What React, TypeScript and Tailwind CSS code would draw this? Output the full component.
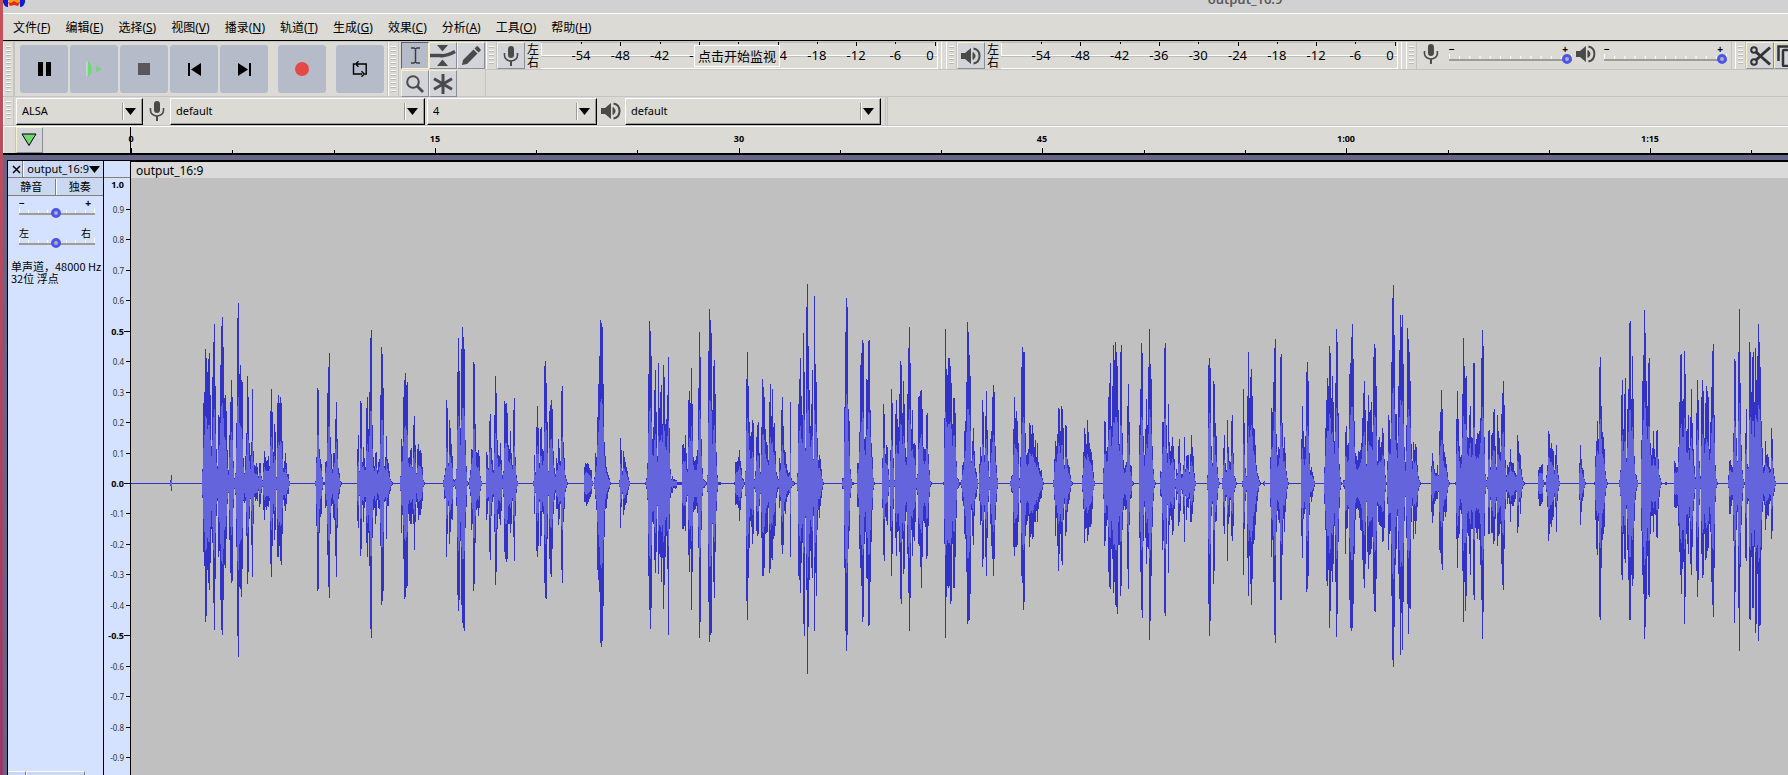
import React, { useMemo } from 'react';

const TRACK_NAME = 'output_16:9';

// Each line: first column, then "above,below" sample heights for every following column
const BURSTS = `
39 3,2 8,7
71 14,14 80,68 91,82 134,138 125,132 111,86 124,99 130,106 88,79 37,45 106,59 141,119 159,146 97,95 34,32 17,17 68,73 66,67 118,116 157,146 166,151 136,116 85,81 88,84 72,55 33,20 13,9 48,56 81,89 103,99 86,97 22,24 5,5 10,11 60,63 165,152 180,173 109,103 118,105 103,113 101,85 25,17 10,19 27,17 50,52 107,100 86,88 40,35 28,15 41,61 94,93 32,40 18,13 17,17 20,15 16,17 7,7 20,23 20,20 7,9 3,3 20,26 32,36 26,23 22,26 23,22 27,23 17,17 72,80 94,93 71,62 31,30 59,56 51,46 6,6 80,73 88,73 80,62 86,77 80,81 42,50 15,16 22,22 30,27 20,20 9,10 9,10 2,2
184 2,2 26,42 95,107 93,105 34,49 24,33 19,30 6,6 1,1 1,1 21,24 22,22 90,71 116,103 130,114 46,50 29,22 14,20 30,34 30,36 64,72 81,93 44,44 15,15 10,10 2,3 1,1
226 34,37 48,44 12,12 82,72 80,65 21,21 36,38 25,24 16,18 75,59 86,73 54,49 91,82 145,145 153,154 58,54 26,26 17,24 30,40 31,32 13,16 21,24 24,25 88,62 136,121 129,117 95,107 17,18 26,17 47,55 24,22 20,22 12,10 4,7 2,2 1,1
269 7,7 44,49 37,31 86,75 103,115 110,113 98,104 101,102 25,30 26,37 33,40 35,40 16,30 58,40 67,66 38,38 10,18 34,24 39,36 32,31 33,31 30,25 16,17 3,3 1,1
312 3,3 8,15 15,14 83,73 75,50 20,22 63,60 55,48 39,35 27,36 4,3 3,2 4,5 14,22 111,111 145,127 112,116 55,57 134,121 156,139 146,144 134,147 43,44 17,23 2,2 1,1 5,5 13,12 34,46 33,40 121,107 119,100 59,59 31,26 30,24 33,32 27,24 7,7 2,2
355 31,36 28,30 15,17 62,68 69,76 35,32 23,18 13,13 68,48 107,101 90,88 43,45 28,30 27,35 40,41 23,27 8,5 12,13 82,68 79,75 80,78 70,75 38,40 34,40 52,49 30,40 18,17 73,53 85,77 26,32 8,9 2,2
402 2,2 28,30 11,9 56,67 77,73 55,62 20,18 54,62 56,52 34,28 32,30 117,99 122,114 100,115 61,55 12,12 72,75 78,90 83,93 74,65 32,30 15,16 9,9 25,25 20,25 44,41 35,35 22,20 92,86 97,99 41,38 25,25 8,8 4,4 1,1
453 16,18 20,18 19,22 20,20 19,18 15,15 13,13 13,10 2,2 0,0 6,5 30,15 26,26 66,86 99,96 127,108 163,159 160,163 156,157 99,122 41,53 27,25 16,24 11,15 8,8 5,5 1,1
488 3,3 45,44 33,23 12,10 32,31 26,26 21,21 16,19 12,11 6,6 2,2
514 1,1 5,5 20,16 109,92 162,126 152,145 127,124 44,38 56,40 93,76 113,89 71,68 27,22 120,90 75,70 91,73 98,98 59,74 118,125 106,101 59,73 64,52 88,85 126,151 55,45 14,14 4,9 7,9 4,4 4,4 3,5 3,4 1,1 1,1 1,1 1,1 1,1 38,45 39,45 35,42 48,47 30,18 14,12 83,71 92,88 80,65 115,126 79,88 26,28 22,26 23,25 27,22 33,29 95,64 151,154 126,138 44,46 15,12 4,4 3,4 2,2 1,1 8,8 132,118 174,158 163,151 150,149 73,40 117,98 123,114 89,68 31,27 8,8 1,1 1,1 1,1
603 1,1 21,21 21,20 22,21 26,24 33,37 22,26 15,14 5,5 4,3 1,1 12,12 104,117 131,136 97,94 61,64 47,37 51,43 63,60 60,50 4,5 12,8 46,47 58,52 61,50 30,22 11,10 56,54 104,92 96,92 86,84 54,50 41,49 38,48 23,24 81,89 99,85 67,74 94,76 56,55 60,52 32,42 11,14 7,8 4,5 25,24 20,17 73,61 86,70 57,61 33,27 31,30 19,18 13,13 10,11 11,9 81,73 5,4 2,2 2,2 1,1
666 10,7 79,92 104,96 125,109 87,79 68,59 150,140 111,152 35,34 176,106 199,190 137,143 93,96 57,67 79,84 113,94 24,32 187,147 119,89 101,112 45,46 23,26 28,34 24,22 14,14 4,6 1,1
711 5,5 5,5 76,84 151,147 185,167 176,151 74,65 62,47 14,14 4,4 1,1 1,1
726 20,23 20,23 51,65 118,84 130,102 143,138 140,133 44,60 46,48 104,94 103,95 142,142 143,141 73,98 40,58 26,26 5,6 1,1
751 25,24 79,71 69,77 29,33 38,37 36,41 14,12 3,3 33,47 94,92 80,70 25,25 3,3 69,54 83,72 64,48 56,47 89,68 122,115 118,120 70,55 102,90 79,85 35,37 26,28 89,70 135,109 156,147 120,114 54,46 73,72 39,53 40,57 38,38 5,6 9,11 86,60 87,62 92,83 93,104 74,73 36,37 34,39 34,43 68,75 70,72 29,42 13,13 2,3 1,1
812 1,1 65,60 154,154 114,113 108,102 125,104 125,102 117,120 100,117 59,60 85,104 85,104 70,73 22,34 5,5 4,4 1,2 1,1 3,4 18,17 21,22 52,50 62,55 101,88 161,140 151,137 128,136 107,110 22,26 42,52 55,61 32,32 15,15 11,13 4,5 0,0 19,17 36,41 27,37 83,83 71,75 28,28 67,73 92,92 53,54 22,18 6,6 44,40 52,62 86,75 98,92 91,75 37,36 18,18 5,5
879 2,2 7,8 8,9 54,63 86,72 65,63 72,63 62,61 40,38 5,4 26,19 116,92 136,99 131,126 131,118 50,52 28,41 30,37 34,32 60,63 58,53 49,50 58,55 50,53 36,38 43,38 26,27 40,38 21,25 15,18 12,15 13,14 5,6 1,1
922 3,3 24,16 42,52 37,34 49,62 75,87 74,70 52,50 77,77 74,81 55,36 18,20 58,52 57,48 24,28 18,20 16,16 8,8 2,2 1,1
951 8,8 31,25 55,59 49,45 39,44 63,57 51,51 40,43 34,43 31,40 23,25 11,6 2,2
972 15,15 62,62 61,57 32,42 36,36 86,88 100,103 120,105 57,65 97,75 138,109 123,98 141,121 131,123 117,130 73,61 39,61 131,112 138,102 50,46 23,26 15,22 18,26 21,25 77,85 99,105 61,41 18,15 17,14 2,2 1,1
1008 58,54 94,88 140,126 130,134 47,57 28,23 54,54 84,80 58,63 116,65 154,156 119,137 104,92 37,43 14,17 3,4 1,1
1029 12,12 11,13 61,66 61,57 135,129 140,132 58,60 30,21 79,89 41,41 32,32 37,36 46,51 37,47 24,25 4,5 14,16 10,10 37,42 44,38 20,27 9,6 9,10 18,30 46,58 14,12 27,36 28,23 28,24 11,15 29,38 48,38 36,30 27,18 10,7 2,2
1076 8,6 118,120 125,152 115,137 37,32 20,20 102,100 99,87 60,38 47,37 16,16 5,4 1,1
1091 5,5 35,42 48,50 20,17 13,13 63,77 36,40 22,33 21,16 62,52 68,57 30,42 7,8 5,4 1,1
1111 2,3 94,91 60,45 15,17 7,8 87,74 131,112 85,72 106,100 114,121 87,95 55,60 54,56 38,41 18,28 10,17 7,8 3,2 1,1 0,0 0,0 1,1 2,2
1139 26,23 75,73 71,56 101,98 135,151 144,159 49,48 28,27 36,36 34,39 126,116 129,116 60,71 35,35 46,48 30,28 12,15 5,5 1,1
1170 44,52 77,74 52,35 36,30 47,25 111,108 121,105 102,92 30,31 13,13 16,18 11,13 7,7 2,3
1193 16,20 55,46 83,97 105,102 97,86 137,144 130,127 85,87 107,98 81,80 42,42 100,98 154,153 141,130 70,58 19,24 6,6 1,1
1212 3,3 3,5 51,70 57,45 38,44 40,25 109,116 120,144 146,147 159,144 124,120 62,70 30,36 27,25 23,24 32,26 31,34 33,46 40,47 65,76 90,95 102,104 73,80 19,18 62,68 88,85 71,71 73,70 81,65 51,53 126,110 139,127 135,128 97,95 22,22 43,38 46,41 36,42 41,43 55,58 50,57 24,44 8,8 1,1 22,20 68,66 63,50 44,47 121,112 185,176 198,183 148,143 69,81 69,65 40,32 97,90 133,115 168,171 156,129 168,166 119,118 36,37 21,13 58,54 155,120 144,150 131,124 102,125 39,38 22,22 41,55 33,37 39,50 36,37 18,23 7,7 3,3 1,1
1300 17,28 30,39 22,32 14,20 10,17 10,15 18,15 8,8 52,66 71,69 93,80 74,86 39,37 31,28 26,33 19,28 11,9 3,3 1,1
1324 1,1 64,55 92,84 64,54 37,50 26,26 28,30 89,87 145,138 117,98 105,127 107,112 46,49 45,52 68,70 77,91 46,45 45,45 120,111 120,116 39,44 44,49 50,55 49,45 52,56 65,81 125,116 153,155 137,128 46,52 9,10 3,3 6,5 52,50 53,50 16,16 48,49 50,49 71,60 74,57 37,35 16,17 68,62 52,52 45,50 31,40 69,80 90,101 102,106 78,65 23,25 8,8 18,20 16,14 21,20 34,38 21,20 20,22 20,22 12,18 10,15 8,8 48,49 42,43 30,18 28,30 14,14 6,5 2,2 1,1
1407 13,15 16,22 16,22 18,20 19,18 3,3 1,1 1,1 8,8 18,23 52,57 49,50 35,40 40,43 34,36 32,33 13,13 28,23 38,48 18,17 8,7 2,2
1448 20,16 38,41 24,28 15,17 13,13 4,4 1,1
1463 1,1 27,36 42,65 62,71 44,37 116,133 126,136 77,84 51,56 46,50 34,43 12,12 4,4 1,1
1488 3,3 13,12 88,91 103,96 54,50 89,75 105,79 25,25 74,66 94,96 160,136 162,136 84,91 127,102 84,95 27,37 9,16 8,7 3,3
1510 43,47 102,91 128,110 173,155 150,143 102,115 77,72 120,111 125,113 40,50 28,32 35,32 52,48 34,30 26,31 52,53 53,54 24,25 8,13 5,4 1,1 0,0 0,0 0,0 1,1 1,1
1543 22,23 20,24 16,24 16,22 36,42 81,68 128,91 129,110 82,85 84,78 132,140 109,113 52,50 54,60 68,70 35,34 66,80 94,91 60,63 34,27 17,15 6,5 70,87 103,113 83,96 22,21 7,5 86,70 103,94 92,91 45,50 80,76 97,74 92,67 86,64 34,40 61,48 96,98 132,121 139,133 68,84 18,18 4,4 1,1
1597 8,4 22,30 23,30 18,22 16,16 50,57 124,139 122,108 45,46 22,28 131,124 174,167 100,83 38,41 13,17 4,4 1,1 50,74 74,77 19,20 16,17 141,135 131,136 91,73 126,124 131,124 81,63 135,149 103,140 127,90 159,157 141,142 116,141 62,66 35,28 16,17 18,21 42,46 28,35 29,31 26,32 16,20 14,17 55,55 44,47 15,12 7,8 2,2
`;

const MID = 305;

const buildWave = () => {
  let peak = '';
  let rms = '';
  BURSTS.trim().split('\n').forEach((line) => {
    const [first, ...cols] = line.split(' ');
    const start = Number(first);
    const pairs = cols.map((c) => c.split(',').map(Number));
    const mean = (i: number) => (pairs[i] ? (pairs[i][0] + pairs[i][1]) / 2 : 0);
    pairs.forEach(([up, down], i) => {
      const x = start + i;
      peak += `M${x} ${MID - up}h1V${MID + 1 + down}h-1z`;
      const level = Math.round(Math.min(up - 1, down - 1, mean(i) * 0.38 + (mean(i - 1) + mean(i + 1)) * 0.07));
      if (level > 0) {
        rms += `M${x} ${MID - level}h1V${MID + 1 + level}h-1z`;
      }
    });
  });
  return { peak, rms };
};

const MENUS: [string, string][] = [
  ['文件', 'F'], ['编辑', 'E'], ['选择', 'S'], ['视图', 'V'], ['播录', 'N'], ['轨道', 'T'],
  ['生成', 'G'], ['效果', 'C'], ['分析', 'A'], ['工具', 'O'], ['帮助', 'H'],
];

const MicIcon = () => (
  <svg width="16" height="20" viewBox="0 0 16 20" fill="none" stroke="#4a4a4a">
    <rect x="5" y="0" width="6" height="12" rx="3" fill="#4a4a4a" stroke="none" />
    <path d="M1.500 7v2.500a6.500 5.500 0 0 0 13 0V7" strokeWidth="1.6" />
    <path d="M8 15v5" strokeWidth="2" />
  </svg>
);

const SpeakerIcon = () => (
  <svg width="20" height="18" viewBox="0 0 20 18" fill="none" stroke="#4a4a4a">
    <path d="M0 6h4l6-5v16l-6-5H0z" fill="#4a4a4a" stroke="none" />
    <path d="M12 5.500a4 4 0 0 1 0 7z" fill="#4a4a4a" strokeWidth="1" />
    <path d="M12.500 1.500c8 1.500 8 13.500 0 15" strokeWidth="2" />
  </svg>
);

const Grip = () => (
  <div className="flex w-[11px] shrink-0 flex-col items-center justify-center self-stretch overflow-hidden border-x border-[#c4c4c2] border-l-white py-1">
    <div className="h-full w-[5px] bg-[repeating-linear-gradient(to_bottom,#ffffff_0px,#ffffff_1px,#b9b9b7_1px,#b9b9b7_2px,transparent_2px,transparent_4px)]" />
  </div>
);

interface ButtonProps {
  label: string;
  active?: boolean;
  children: React.ReactNode;
}

const TransportButton: React.FC<ButtonProps> = ({ label, children }) => (
  <button aria-label={label} className="flex h-12 w-12 shrink-0 items-center justify-center rounded-[3px] bg-[#b5bbc8]">
    {children}
  </button>
);

const ToolButton: React.FC<ButtonProps> = ({ label, active, children }) => (
  <button
    aria-label={label}
    className={
      active
        ? 'flex h-[27px] w-7 shrink-0 items-center justify-center border border-[#5d6070] border-r-[#f7f2c8] border-b-[#f7f2c8] bg-[#b5bbc8]'
        : 'flex h-[27px] w-7 shrink-0 items-center justify-center border border-[#8a8d98] border-l-[#f7f2c8] border-t-[#f7f2c8] bg-[#d3d4d8]'
    }
  >
    {children}
  </button>
);

const METER_STEPS = [-54, -48, -42, -36, -30, -24, -18, -12, -6, 0];

const Meter: React.FC<{ label: string; hint?: string; children: React.ReactNode }> = ({ label, hint, children }) => (
  <div className="flex shrink-0 items-stretch">
    <Grip />
    <ToolButton label={label}>{children}</ToolButton>
    <div className="flex w-4 flex-col items-center justify-center text-[12px] leading-[13px]">
      <span>左</span>
      <span>右</span>
    </div>
    <div className="relative w-[397px] border-r border-white">
      <svg width="100%" height="27" fontSize="13" fill="#000">
        <path d="M0 13.500H400M0 26.500H400M0.500 14V0" stroke="#fff" />
        <path d="M0 14.500H400M0 .5H400" stroke="#bdbdbb" />
        {METER_STEPS.map((db, i) => (
          <g key={db}>
            <rect x={Math.round(40 + i * 39.3)} y="0" width="1" height={i % 2 || db === 0 ? 4 : 2} />
            {/* -30 would sit entirely under the hint */}
            {!(hint && db === -30) && (
              <text x={db === 0 ? 389 : 40 + i * 39.3} y="18" textAnchor="middle">{db}</text>
            )}
          </g>
        ))}
      </svg>
      {hint && (
        <div role="tooltip" className="absolute left-[153px] top-[3px] flex h-[22px] items-center border border-white bg-[#dbdad5] px-[3px] text-[13px] leading-5 whitespace-nowrap">
          {hint}
        </div>
      )}
    </div>
    <div className="mr-1 w-1 border-r border-white" />
  </div>
);

interface SliderProps {
  label: string;
  value: number;
  low: string;
  high: string;
  ticks: number;
}

const Slider: React.FC<SliderProps> = ({ label, value, low, high, ticks }) => (
  <div className="flex w-full flex-col">
    <div className="flex h-2.5 items-center justify-between pr-1 text-[10px] leading-[10px]">
      <span className={low === '−' ? 'font-bold' : ''}>{low}</span>
      <span className={high === '+' ? 'font-bold' : ''}>{high}</span>
    </div>
    <div className="grid h-2.5 items-center">
      <svg className="col-start-1 row-start-1" width="100%" height="10" viewBox="0 0 120 10" preserveAspectRatio="none" shapeRendering="crispEdges">
        {Array.from({ length: ticks }, (_, i) => (
          <path
            key={i}
            d={`M${0.5 + (i * 119) / (ticks - 1)} ${i === 0 || i === ticks - 1 ? 0 : 2}V5`}
            stroke="#fff"
            vectorEffect="non-scaling-stroke"
          />
        ))}
        <rect y="5" width="120" height="2" fill="#9c9c9c" />
      </svg>
      <input
        type="range"
        aria-label={label}
        defaultValue={value}
        className="col-start-1 row-start-1 h-2.5 w-full appearance-none bg-transparent [&::-webkit-slider-thumb]:h-2.5 [&::-webkit-slider-thumb]:w-2.5 [&::-webkit-slider-thumb]:appearance-none [&::-webkit-slider-thumb]:rounded-full [&::-webkit-slider-thumb]:border-[3px] [&::-webkit-slider-thumb]:border-[#4b55ee] [&::-webkit-slider-thumb]:bg-[#b0b0b0]"
      />
    </div>
  </div>
);

const Combo: React.FC<{ label: string; value: string; width: string }> = ({ label, value, width }) => (
  <div className={`grid h-[27px] shrink-0 border border-white border-b-black border-r-black shadow-[inset_-1px_-1px_0_#9a9a98] ${width}`}>
    <select aria-label={label} defaultValue={value} className="col-start-1 row-start-1 appearance-none bg-transparent pl-[5px] text-[11px] outline-none">
      <option>{value}</option>
    </select>
    <div className="pointer-events-none col-start-1 row-start-1 my-1 flex w-5 items-center justify-end justify-self-end border-l border-[#9a9a98] pr-1.5 shadow-[inset_1px_0_0_#fff]">
      <svg width="11" height="7"><path d="M0 0h11L5.500 7z" /></svg>
    </div>
  </div>
);

const Transport = () => (
  <div className="flex shrink-0 border-r border-[#c4c4c2]">
    <Grip />
    <div className="flex items-center gap-0.5 border-l border-[#c4c4c2] pl-[5px] pr-[3px]">
      <TransportButton label="暂停">
        <svg width="13" height="14"><path d="M0 0h5v14H0zM8 0h5v14H8z" /></svg>
      </TransportButton>
      <TransportButton label="播放">
        <svg width="16" height="16" viewBox="0 0 16 16">
          <path d="M1 0h1c5 3 5 13 0 16H1z" fill="#70d877" />
          <path d="M1 .5V15.500" stroke="#d6e8d8" />
          <path d="M10 4.500L16 8l-6 3.500z" fill="#70d877" />
          <path d="M10.500 5v6" stroke="#9bbda2" />
        </svg>
      </TransportButton>
      <TransportButton label="停止">
        <svg width="12" height="12"><rect width="12" height="12" fill="#585858" /></svg>
      </TransportButton>
      <TransportButton label="跳至开头">
        <svg width="13" height="13"><path d="M0 0h2v13H0zM13 0v13L3 6.500z" /></svg>
      </TransportButton>
      <TransportButton label="跳至结尾">
        <svg width="13" height="13"><path d="M11 0h2v13h-2zM0 0v13l10-6.500z" /></svg>
      </TransportButton>
      <div className="flex gap-2.5 pl-2">
        <TransportButton label="录制">
          <svg width="14" height="14"><circle cx="7" cy="7" r="7" fill="#e54848" /></svg>
        </TransportButton>
        <TransportButton label="循环">
          <svg width="16" height="16" viewBox="0 0 16 16" fill="none" stroke="#000" strokeWidth="1.4">
            <path d="M4.500 3H14.200V13h-1.700M3.200 3H1.500v10h8.500" />
            <path d="M6.500 .3L3.800 3l2.700 2.700M9.500 10.300L12.200 13l-2.700 2.700" />
          </svg>
        </TransportButton>
      </div>
    </div>
  </div>
);

const Tools = () => (
  <div className="flex shrink-0 border-r border-[#c4c4c2]">
    <Grip />
    <div className="grid grid-cols-3 content-start gap-y-px pl-0.5">
      <ToolButton label="选择工具" active>
        <svg width="9" height="17" fill="none" stroke="#3c3c3c" strokeWidth="1.5">
          <path d="M0 1h3l1.500 1L6 1h3M4.500 1.500v14M0 16h3l1.500-1L6 16h3" />
        </svg>
      </ToolButton>
      <ToolButton label="包络工具">
        <svg width="26" height="21" viewBox="0 0 26 21">
          <path d="M7 0h11l-5.500 6.500zM7 21h11l-5.500-6.500z" fill="#4a4a4a" />
          <path d="M0 10.500h10q6 1 15-4" fill="none" stroke="#4a4a4a" strokeWidth="3.500" />
        </svg>
      </ToolButton>
      <ToolButton label="绘制工具">
        <svg width="19" height="19" viewBox="0 0 19 19" fill="#4a4a4a">
          <path d="M0 19l1-5L11.500 3.500l4 4L5 18zM12.500 2.500L15 0q1 0 3.700 3.700v.8L16.500 6.500z" />
        </svg>
      </ToolButton>
      <ToolButton label="缩放工具">
        <svg width="18" height="18" viewBox="0 0 18 18" fill="none" stroke="#4a4a4a">
          <circle cx="7" cy="7" r="5.800" strokeWidth="2" />
          <path d="M11 11l6 6" strokeWidth="2.800" />
        </svg>
      </ToolButton>
      <ToolButton label="多功能工具">
        <svg width="20" height="20" viewBox="0 0 20 20" stroke="#4a4a4a" strokeWidth="3">
          <path d="M10 0v20M1 4.800l18 10.400M19 4.800L1 15.200" />
        </svg>
      </ToolButton>
    </div>
  </div>
);

const Mixer = () => (
  <div className="flex shrink-0 border-r border-[#c4c4c2]">
    <Grip />
    <div className="flex w-[314px] items-center gap-1 pb-[3px] pl-1.5 pr-1">
      <MicIcon />
      <div className="ml-1.5 w-[124px]"><Slider label="录音音量" value={100} low="−" high="+" ticks={13} /></div>
      <SpeakerIcon />
      <div className="ml-1 w-[124px]"><Slider label="播放音量" value={100} low="−" high="+" ticks={13} /></div>
    </div>
  </div>
);

const EditBar = () => (
  <div className="ml-[3px] flex shrink-0">
    <Grip />
    <ToolButton label="剪切">
      <svg width="21" height="20" viewBox="0 0 21 20" fill="none" stroke="#333" strokeWidth="2">
        <circle cx="4" cy="4" r="2.800" />
        <circle cx="4" cy="16" r="2.800" />
        <path d="M6 6l14 12.500M6 14L20 1.500" strokeWidth="3" />
      </svg>
    </ToolButton>
    <ToolButton label="复制">
      <svg width="22" height="22" viewBox="0 0 22 22" fill="none" stroke="#333" strokeWidth="2.500">
        <rect x="6" y="5" width="14" height="16" rx="1" />
        <path d="M1.500 16V1.500H15" />
      </svg>
    </ToolButton>
  </div>
);

const Timeline = () => (
  <div className="flex h-[29px] shrink-0 border-t border-white border-b-2 border-b-black">
    <div className="w-[13px] shrink-0 border-x border-[#c4c4c2] border-l-white" />
    <button aria-label="固定播放头" className="flex w-[27px] shrink-0 items-center justify-center border border-[#8a8d98] border-l-[#f7f2c8] border-t-[#f7f2c8] bg-[#d3d4d8]">
      <svg width="17" height="14"><path d="M1 1h14L8 12.500z" fill="#72d672" stroke="#000" /></svg>
    </button>
    <div className="min-w-0 flex-1 overflow-hidden pl-[78px]">
      <svg width="100%" height="26" className="overflow-visible" fontSize="9" fontWeight="bold" textAnchor="middle">
        <rect x="9" width="1" height="26" />
        {Array.from({ length: 24 }, (_, i) => {
          const x = Math.round(10 + i * 101.27);
          const sec = i * 5;
          const major = sec % 15 === 0;
          const text = sec < 60 ? `${sec}` : `${Math.floor(sec / 60)}:${String(sec % 60).padStart(2, '0')}`;
          return (
            <g key={sec}>
              <rect x={x} y={major ? 21 : 23} width="1" height={major ? 5 : 3} />
              {major && <text x={x} y="15">{text}</text>}
            </g>
          );
        })}
      </svg>
    </div>
  </div>
);

const TrackPanel = () => (
  <div className="flex w-[97px] shrink-0 flex-col border-x border-black bg-[#d4e2ff]">
    <div className="flex h-[18px] shrink-0 border-t border-b border-t-black border-b-[#808080] bg-[#cbd8f3]">
      <button aria-label="关闭" className="flex w-[18px] items-center justify-center border-r border-[#808080] pl-0.5">
        <svg width="9" height="9" stroke="#000" strokeWidth="1.500"><path d="M1 1l7 7M8 1L1 8" /></svg>
      </button>
      <button className="flex flex-1 items-center justify-between border-l border-white pl-[3px] pr-[3px] text-[11px] leading-4">
        {TRACK_NAME}
        <svg width="11" height="7"><path d="M0 0h11L5.500 7z" /></svg>
      </button>
    </div>
    <div className="flex h-[18px] shrink-0 border-b border-[#808080] bg-[#cbd8f3] pt-px text-[11px] leading-4">
      <button className="flex-1 border-r border-[#808080]">静音</button>
      <button className="flex-1 border-l border-white">独奏</button>
    </div>
    <div className="flex flex-col gap-2.5 pl-[11px] pr-2 pt-0.5">
      <Slider label="增益" value={48} low="−" high="+" ticks={9} />
      <Slider label="声像" value={48} low="左" high="右" ticks={9} />
    </div>
    <div className="pl-[3px] pt-3 font-['Noto_Sans_CJK_SC',sans-serif] text-[11px] leading-3 whitespace-nowrap">
      <p>单声道，48000 Hz</p>
      <p>32位 浮点</p>
    </div>
    <div className="mt-auto flex h-1 bg-[#d4e2ff]">
      <button aria-label="折叠" className="w-[18px] border-t border-r border-t-white border-r-[#808080] bg-[#cbd8f3]" />
      <button aria-label="选择轨道" className="w-[59px] border-t border-l border-r border-l-white border-t-white border-r-[#808080] bg-[#cbd8f3]" />
    </div>
  </div>
);

const LEVELS = Array.from({ length: 20 }, (_, i) => (10 - i) / 10);

const LevelRuler = () => (
  <div className="flex w-[27px] shrink-0 flex-col overflow-hidden border-r border-black bg-[#d4e2ff]">
    <div className="h-[18px] shrink-0 border-t border-b border-t-black border-b-[#808080]" />
    <svg width="26" height="609" className="shrink-0" textAnchor="end">
      {LEVELS.map((v) => {
        const major = v === 1 || Math.abs(v) === 0.5 || v === 0;
        const y = Math.round(MID - v * 304.5);
        return (
          <g key={v}>
            {v < 1 && <rect x={major ? 20 : 22} y={y} width={major ? 6 : 4} height="1" />}
            <text
              x="20"
              y={v === 1 ? 10 : y + 4}
              fontSize={major ? 9 : 8}
              fontWeight={major ? 'bold' : 'normal'}
              fill={major ? '#000' : '#333'}
            >
              {v.toFixed(1)}
            </text>
          </g>
        );
      })}
    </svg>
  </div>
);

const Waveform = () => {
  const { peak, rms } = useMemo(buildWave, []);

  return (
    <div className="flex min-w-0 flex-1 flex-col overflow-hidden bg-[#c0c0c0]">
      <div className="flex h-[18px] shrink-0 items-center border-t border-black bg-[#dadada] pl-[5px] pt-0.5 text-[12px] leading-4 shadow-[inset_0_1px_0_#000]">
        {TRACK_NAME}
      </div>
      <svg width="100%" height="609" className="shrink-0" shapeRendering="crispEdges">
        <rect x="0" y={MID} width="100%" height="1" fill="#3232c8" />
        <path d={peak} fill="#3232c8" />
        <path d={rms} fill="#6464dc" />
      </svg>
    </div>
  );
};

const App: React.FC = () => (
  <div className="flex h-screen overflow-hidden bg-[#dbdad5] font-['Noto_Sans','Noto_Sans_CJK_SC',sans-serif] text-black">
    <div className="w-[3px] shrink-0 bg-linear-to-b from-[#c4525a] to-[#983668]" />
    <div className="flex min-w-0 flex-1 flex-col">
      <header className="flex h-[13px] shrink-0 items-end overflow-hidden bg-[#d1d1d1]">
        <svg width="22" height="13" viewBox="0 0 22 13">
          <path d="M5 0h13l-3 6-3-2-3 2z" fill="#ff9a10" />
          <path d="M5 2l3 1 3-2 3 2 3-1-2 4-4-1-4 1z" fill="#e8281c" />
          <path d="M0 0h5v7Q1 7 0 2zM22 0h-5v7q4 0 5-5z" fill="#0a1ad8" />
        </svg>
        <h1 className="min-w-0 flex-1 pb-1 pl-[677px] text-center text-[13px] leading-5 font-semibold text-[#5a5a5a]">{TRACK_NAME}</h1>
      </header>
      <nav className="flex h-7 shrink-0 items-center gap-[15px] border-t border-b border-t-white border-b-black pl-2.5 pt-0.5 text-[12px]">
        {MENUS.map(([name, key]) => (
          <button key={key} className="whitespace-nowrap">
            {name}(<span className="underline">{key}</span>)
          </button>
        ))}
      </nav>
      <div className="flex h-14 shrink-0 border-t border-b border-[#c4c4c2]">
        <Transport />
        <Tools />
        <div className="min-w-0 flex-1 overflow-hidden">
          <div className="flex h-7 w-full border-b border-[#c4c4c2]">
            <Meter label="录音电平" hint="点击开始监视"><MicIcon /></Meter>
            <Meter label="播放电平"><SpeakerIcon /></Meter>
            <Mixer />
            <EditBar />
          </div>
        </div>
      </div>
      <div className="flex h-[29px] shrink-0 items-center border-b border-[#c4c4c2]">
        <Grip />
        <div className="pl-0.5"><Combo label="音频主机" value="ALSA" width="w-[127px]" /></div>
        <div className="flex w-[27px] justify-center"><MicIcon /></div>
        <Combo label="录音设备" value="default" width="w-[255px]" />
        <div className="pl-0.5"><Combo label="录音声道" value="4" width="w-[170px]" /></div>
        <div className="flex w-7 justify-center"><SpeakerIcon /></div>
        <Combo label="播放设备" value="default" width="w-[256px]" />
        <div className="ml-1 w-[3px] self-stretch border-x border-[#c4c4c2]" />
      </div>
      <Timeline />
      <main className="flex min-h-0 flex-1 bg-[#656585] pl-1 pt-[5px]">
        <TrackPanel />
        <LevelRuler />
        <Waveform />
      </main>
    </div>
  </div>
);

export default App;
